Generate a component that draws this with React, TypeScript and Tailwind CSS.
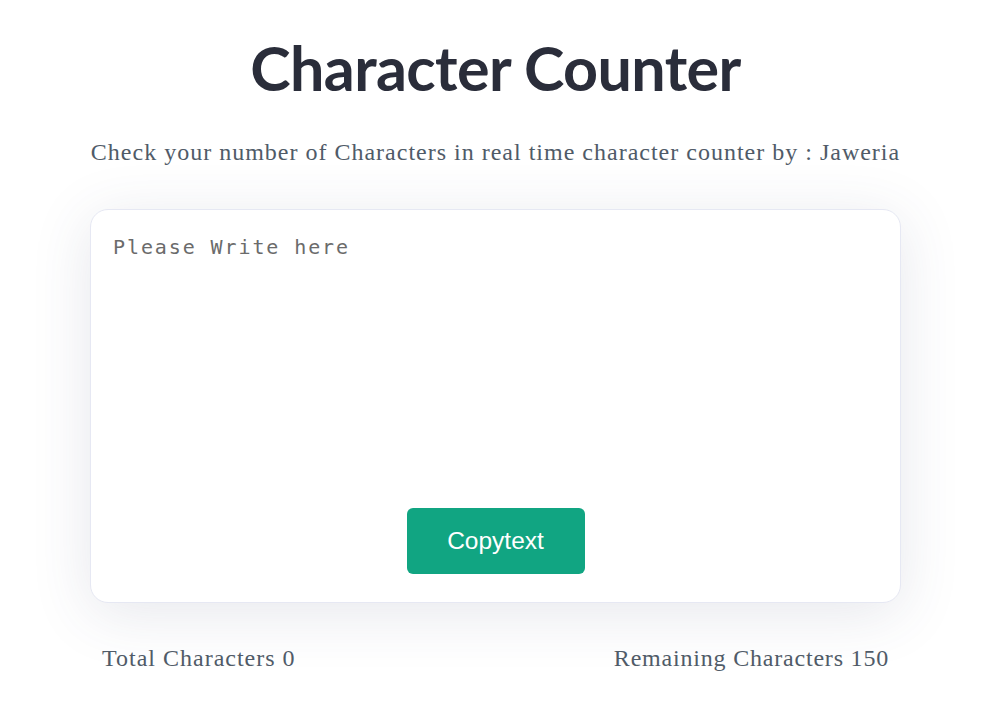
import React, { useState } from "react";

export default function App() {
  const [text, setText] = useState("");
  return (
    <div className="min-h-[714px] w-full bg-white">
      <div className="w-[991px] flex flex-col items-center">
        <h1 className="mt-[28px] text-[61px] leading-[80px] font-bold text-[#2a2d3a] [font-family:Lato,sans-serif] tracking-[-0.6px]">
          Character Counter
        </h1>
        <p className="mt-[29px] text-[24px] leading-[30px] text-[#505b68] [font-family:'Liberation_Serif',serif] tracking-[1px]">
          Check your number of Characters in real time character counter by : Jaweria
        </p>
        <div className="mt-[42px] w-[811px] h-[394px] rounded-[18px] border border-[#e6e8f3] bg-white shadow-[0_10px_60px_rgba(60,70,110,0.13)] flex flex-col items-center px-[22px] pt-[22px] pb-[28px]">
          <textarea
            value={text}
            onChange={(e) => setText(e.target.value.slice(0, 150))}
            placeholder="Please Write here"
            className="w-full flex-1 resize-none outline-none bg-transparent text-[20px] leading-[30px] tracking-[1.9px] text-[#333] placeholder:text-[#6b6b6b] [font-family:'DejaVu_Sans_Mono',monospace]"
          />
          <button className="mt-[8px] w-[178px] h-[66px] rounded-[6px] bg-[#11a582] text-white text-[24.5px] [font-family:'Liberation_Sans',Arial,sans-serif]">
            Copytext
          </button>
        </div>
        <div className="mt-[40px] w-[811px] flex justify-between px-[12px] text-[24px] leading-[30px] text-[#505b68] [font-family:'Liberation_Serif',serif] tracking-[1px]">
          <span>Total Characters {text.length}</span>
          <span className="tracking-[0.8px]">Remaining Characters {150 - text.length}</span>
        </div>
      </div>
    </div>
  );
}
